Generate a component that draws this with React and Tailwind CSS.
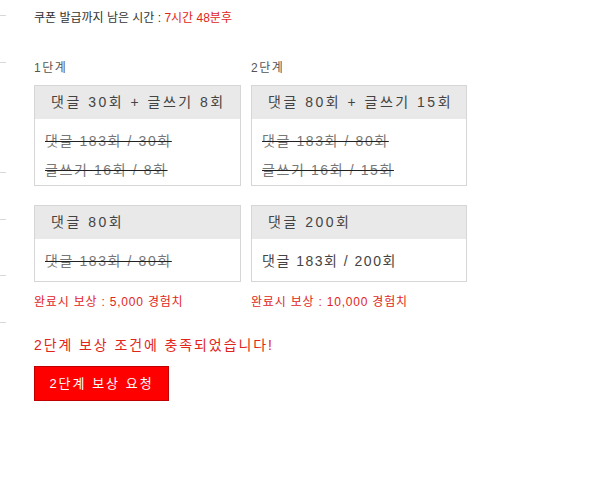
import React from "react";

const FONT = { fontFamily: '"Liberation Sans", "Noto Sans CJK KR", sans-serif' };

const Box = ({ title, rows, done = true }) => (
    <div className="border border-[#d6d6d6] bg-white">
        <div className="h-[33px] flex items-center bg-[#e9e9e9] pl-[16px] text-[14px] tracking-[2.5px] text-[#444]">
            {title}
        </div>
        <div className={"pt-[8px] pl-[10px] " + (rows.length === 1 ? "pb-[5px]" : "")}>
            {rows.map((r) => (
                <div
                    key={r}
                    className={
                        "h-[29px] text-[14px] leading-[29px] " +
                        (done
                            ? "line-through decoration-[#222] text-[#777] tracking-[1.6px]"
                            : "text-[#444] tracking-[1.5px]")
                    }
                >
                    {r}
                </div>
            ))}
        </div>
    </div>
);

export default function App() {
    return (
        <div className="relative w-[598px] h-[482px] bg-white" style={FONT}>
            {/* edge ticks */}
            {[15, 62, 172, 219, 275, 322].map((y) => (
                <div key={y} className="absolute left-0 w-[6px] h-px bg-[#d8d8d8]" style={{ top: y }} />
            ))}

            <div className="pl-[34px] pt-[11px]">
                <div className="text-[12px] leading-[14px] text-[#333]">
                    쿠폰 발급까지 남은 시간 : <span className="text-[#e1251b]">7시간 48분후</span>
                </div>

                <div className="mt-[36px] grid grid-cols-[207px_216px] gap-x-[10px]">
                    <div>
                        <div className="text-[12px] leading-[14px] tracking-[1.5px] text-[#555] h-[24px]">1단계</div>
                        <Box title="댓글 30회 + 글쓰기 8회" rows={["댓글 183회 / 30회", "글쓰기 16회 / 8회"]} />
                        <div className="mt-[19px]">
                            <Box title="댓글 80회" rows={["댓글 183회 / 80회"]} />
                        </div>
                        <div className="mt-[12px] text-[12px] leading-[16px] tracking-[0.8px] text-[#e1251b]">완료시 보상 : 5,000 경험치</div>
                    </div>
                    <div>
                        <div className="text-[12px] leading-[14px] tracking-[1.5px] text-[#555] h-[24px]">2단계</div>
                        <Box title="댓글 80회 + 글쓰기 15회" rows={["댓글 183회 / 80회", "글쓰기 16회 / 15회"]} />
                        <div className="mt-[19px]">
                            <Box title="댓글 200회" rows={["댓글 183회 / 200회"]} done={false} />
                        </div>
                        <div className="mt-[12px] text-[12px] leading-[16px] tracking-[0.8px] text-[#e1251b]">완료시 보상 : 10,000 경험치</div>
                    </div>
                </div>

                <div className="mt-[25px] text-[14px] leading-[20px] tracking-[1.9px] text-[#e1251b]">2단계 보상 조건에 충족되었습니다!</div>
                <button className="mt-[11px] w-[135px] h-[35px] bg-[#ff0000] border border-[#c00000] text-white text-[13px] tracking-[2px] block">
                    2단계 보상 요청
                </button>
            </div>
        </div>
    );
}
